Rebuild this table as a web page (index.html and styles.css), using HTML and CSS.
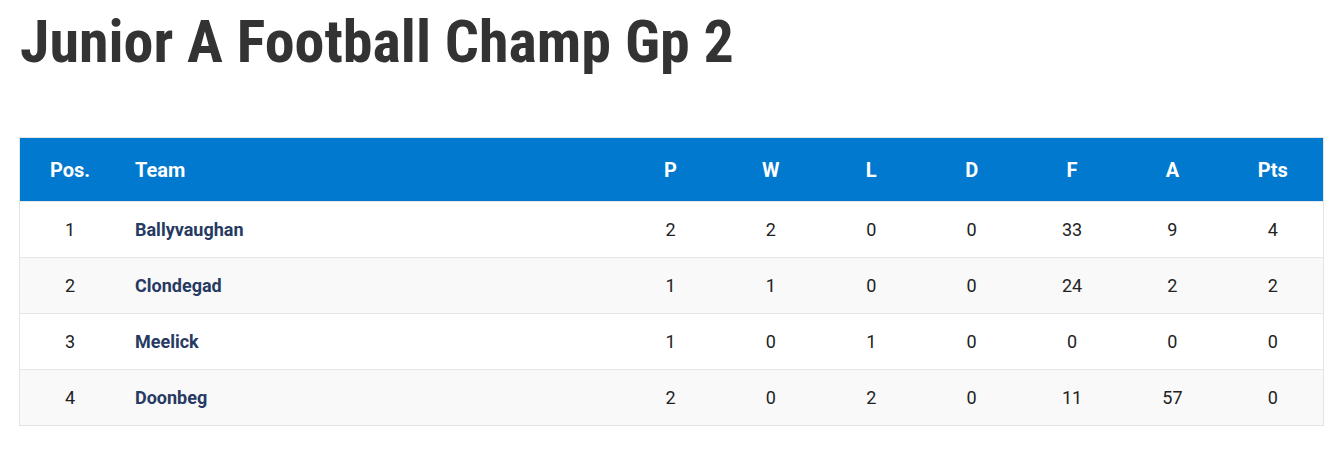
FILE: index.html
```html
<!DOCTYPE html>
<html>
<head>
<meta charset="utf-8">
<link rel="stylesheet" href="styles.css">
</head>
<body>
<div class="page">
  <h1 class="title">Junior A Football Champ Gp 2</h1>
  <table class="league">
    <thead>
      <tr>
        <th class="pos">Pos.</th>
        <th class="team">Team</th>
        <th class="num">P</th>
        <th class="num">W</th>
        <th class="num">L</th>
        <th class="num">D</th>
        <th class="num">F</th>
        <th class="num">A</th>
        <th class="num">Pts</th>
      </tr>
    </thead>
    <tbody>
      <tr><td class="pos">1</td><td class="team">Ballyvaughan</td><td class="num">2</td><td class="num">2</td><td class="num">0</td><td class="num">0</td><td class="num">33</td><td class="num">9</td><td class="num">4</td></tr>
      <tr><td class="pos">2</td><td class="team">Clondegad</td><td class="num">1</td><td class="num">1</td><td class="num">0</td><td class="num">0</td><td class="num">24</td><td class="num">2</td><td class="num">2</td></tr>
      <tr><td class="pos">3</td><td class="team">Meelick</td><td class="num">1</td><td class="num">0</td><td class="num">1</td><td class="num">0</td><td class="num">0</td><td class="num">0</td><td class="num">0</td></tr>
      <tr><td class="pos">4</td><td class="team">Doonbeg</td><td class="num">2</td><td class="num">0</td><td class="num">2</td><td class="num">0</td><td class="num">11</td><td class="num">57</td><td class="num">0</td></tr>
    </tbody>
  </table>
</div>
</body>
</html>
```
FILE: styles.css
```css
html, body {
  margin: 0;
  padding: 0;
  background: #ffffff;
}
.page {
  padding: 0 14px 0 19px;
  font-family: Roboto, "Liberation Sans", sans-serif;
}
.title {
  margin: 0;
  padding: 2px 0 0 1px;
  height: 137px;
  box-sizing: border-box;
  font-family: "Roboto Condensed", Roboto, sans-serif;
  font-stretch: condensed;
  font-weight: 700;
  font-size: 60px;
  line-height: 80px;
  color: #333333;
}
.league {
  width: 1305px;
  border-collapse: collapse;
  table-layout: fixed;
  border: 1px solid #e4e4e4;
}
.league th {
  background: #0079ce;
  color: #ffffff;
  font-weight: 700;
  font-size: 20px;
  height: 63px;
  padding: 0;
}
.league td {
  height: 55px;
  padding: 0;
  font-size: 18px;
  color: #222222;
  border-top: 1px solid #e6e6e6;
}
.league tbody tr:nth-child(even) td {
  background: #f9f9f9;
}
.league .pos {
  width: 100px;
  text-align: center;
}
.league .team {
  text-align: left;
  padding-left: 15px;
}
.league td.team {
  font-weight: 700;
  color: #263a62;
}
.league .num {
  width: 100.4px;
  text-align: center;
}
```
